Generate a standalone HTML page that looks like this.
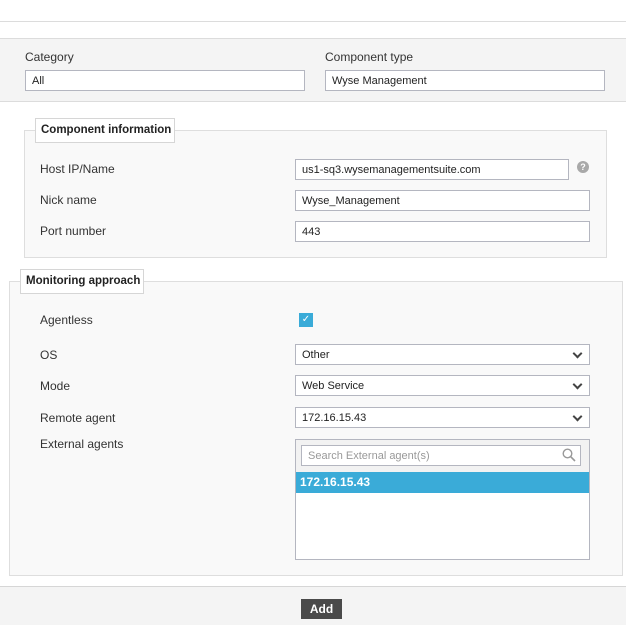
<!DOCTYPE html>
<html><head><style>
*{box-sizing:border-box;margin:0;padding:0}
body{width:626px;height:625px;position:relative;background:#fff;font-family:"Liberation Sans",sans-serif;font-size:12px;color:#333;overflow:hidden}
.a{position:absolute}
.lbl{position:absolute;font-size:12px;color:#333;white-space:nowrap}
.inp{position:absolute;background:#fff;border:1px solid #b4b6c0;height:21px;font-size:11px;line-height:21px;padding-left:6px;color:#222;white-space:nowrap}
.sel:after{content:"";position:absolute;right:8px;top:5px;width:5px;height:5px;border-right:2px solid #444;border-bottom:2px solid #444;transform:rotate(45deg)}
.fs{position:absolute;border:1px solid #dedede;background:#f9f9f9}
.lg{position:absolute;background:#fff;border:1px solid #d6d6d6;font-size:11.5px;font-weight:bold;color:#222;padding:0 5px;line-height:23px;white-space:nowrap;height:25px}
</style></head><body>
<div class="a" style="left:0;top:21px;width:626px;height:1px;background:#dcdcdc"></div>
<div class="a" style="left:0;top:38px;width:626px;height:64px;background:#f4f4f4;border-top:1px solid #dcdcdc;border-bottom:1px solid #dcdcdc"></div>
<div class="lbl" style="left:25px;top:50px">Category</div>
<div class="inp" style="left:25px;top:70px;width:280px">All</div>
<div class="lbl" style="left:325px;top:50px">Component type</div>
<div class="inp" style="left:325px;top:70px;width:280px">Wyse Management</div>

<div class="fs" style="left:24px;top:130px;width:583px;height:128px"></div>
<div class="lg" style="left:35px;top:118px;width:140px">Component information</div>
<div class="lbl" style="left:40px;top:162px">Host IP/Name</div>
<div class="inp" style="left:295px;top:159px;width:274px">us1-sq3.wysemanagementsuite.com</div>
<div class="a" style="left:577px;top:161px;width:12px;height:12px;border-radius:50%;background:#a9a9a9;color:#fff;font-size:9px;font-weight:bold;text-align:center;line-height:12px">?</div>
<div class="lbl" style="left:40px;top:193px">Nick name</div>
<div class="inp" style="left:295px;top:190px;width:295px">Wyse_Management</div>
<div class="lbl" style="left:40px;top:224px">Port number</div>
<div class="inp" style="left:295px;top:221px;width:295px">443</div>

<div class="fs" style="left:9px;top:281px;width:614px;height:295px"></div>
<div class="lg" style="left:20px;top:269px;width:124px">Monitoring approach</div>
<div class="lbl" style="left:40px;top:313px">Agentless</div>
<div class="a" style="left:299px;top:313px;width:14px;height:14px;background:#3aabd8;color:#fff;font-size:10px;text-align:center;line-height:14px">✓</div>
<div class="lbl" style="left:40px;top:348px">OS</div>
<div class="inp sel" style="left:295px;top:344px;width:295px">Other</div>
<div class="lbl" style="left:40px;top:379px">Mode</div>
<div class="inp sel" style="left:295px;top:375px;width:295px">Web Service</div>
<div class="lbl" style="left:40px;top:411px">Remote agent</div>
<div class="inp sel" style="left:295px;top:407px;width:295px">172.16.15.43</div>
<div class="lbl" style="left:40px;top:437px">External agents</div>
<div class="a" style="left:295px;top:439px;width:295px;height:121px;background:#fff;border:1px solid #b4b6c0">
 <div class="a" style="left:0;top:0;width:293px;height:32px;background:#f2f2f2"></div>
 <div class="inp" style="left:5px;top:5px;width:280px;height:21px;color:#999">Search External agent(s)</div>
 <svg class="a" style="left:266px;top:8px" width="14" height="14" viewBox="0 0 14 14"><circle cx="5.5" cy="5.5" r="4.3" fill="none" stroke="#999" stroke-width="1.4"/><path d="M8.7 8.7L13 13" stroke="#999" stroke-width="1.6"/></svg>
 <div class="a" style="left:0;top:32px;width:293px;height:21px;background:#3aabd8;color:#fff;font-weight:bold;font-size:12px;line-height:20px;padding-left:4px">172.16.15.43</div>
</div>

<div class="a" style="left:0;top:586px;width:626px;height:39px;background:#f4f4f4;border-top:1px solid #d6d6d6"></div>
<div class="a" style="left:301px;top:599px;width:41px;height:20px;background:#4a4a4a;color:#fff;font-size:12px;font-weight:bold;text-align:center;line-height:20px">Add</div>
</body></html>
